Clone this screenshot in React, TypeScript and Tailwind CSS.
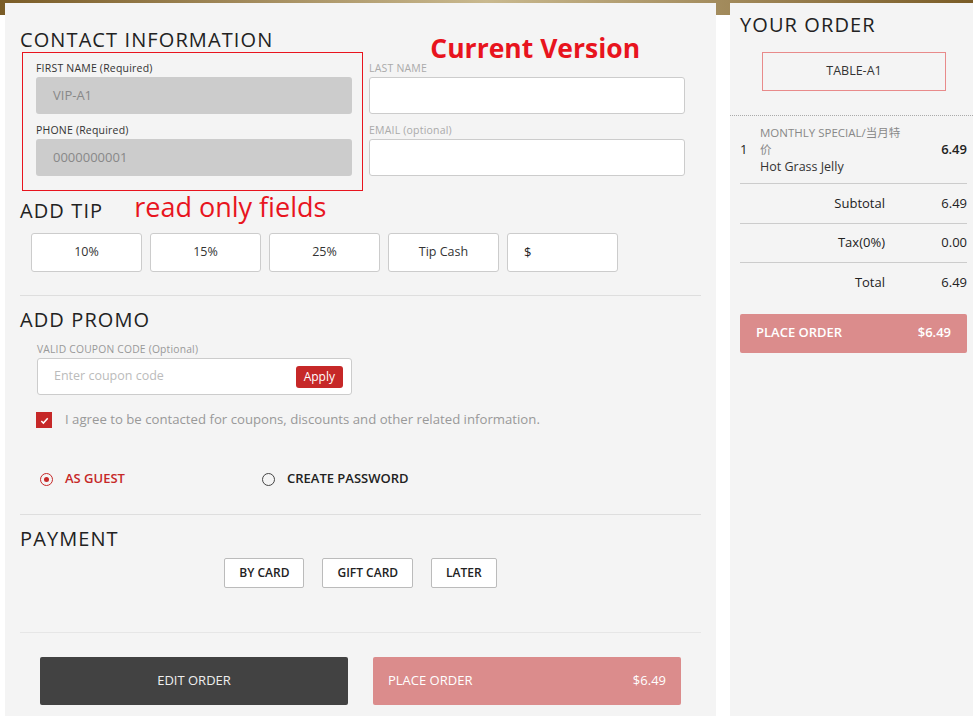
const font = { fontFamily: '"Open Sans", "Noto Sans CJK SC", sans-serif' };

function TextField({ label, value, readOnly, labelMuted }: { label: string; value?: string; readOnly?: boolean; labelMuted?: boolean }) {
  return (
    <div className="flex flex-col">
      <span className={`text-[10.5px] leading-[14px] tracking-[0.2px] ${labelMuted ? 'text-[#aaa]' : 'text-[#333]'}`}>{label}</span>
      <div
        className={`mt-[2px] h-[37px] rounded-[3px] flex items-center px-[17px] text-[13px] ${
          readOnly ? 'bg-[#cccccc] text-[#888]' : 'bg-white border border-[#ccc]'
        }`}
      >
        {value}
      </div>
    </div>
  );
}

function SectionTitle({ children }: { children: React.ReactNode }) {
  return <h2 className="h-[24px] text-[20px] leading-[24px] text-[#222] tracking-[1.1px] whitespace-nowrap">{children}</h2>;
}

export default function App() {
  const tips = ['10%', '15%', '25%', 'Tip Cash'];
  return (
    <div className="w-[973px] h-[716px] overflow-hidden bg-white" style={font}>
      {/* gold banner behind panels */}
      <div className="h-[15px] bg-gradient-to-r from-[#7a5c26] via-[#c9b98f] to-[#7a5c26]" />
      <div className="flex -mt-[12px] h-[713px]">
        {/* LEFT: checkout form */}
        <div className="ml-[5px] w-[711px] bg-[#f4f4f4] pl-[15px] pr-[15px] pt-[25px]">
          <div className="flex items-start h-[24px]">
            <SectionTitle>CONTACT INFORMATION</SectionTitle>
            <span className="ml-[157px] mt-[5px] text-[26.5px] font-bold leading-[30px] text-[#e8141e] whitespace-nowrap">Current Version</span>
          </div>
          <div className="flex">
            <div className="ml-[2px] w-[341px] h-[139px] border border-[#e8141e] pt-[8px] pl-[13px] pr-[10px] flex flex-col gap-[9px]">
              <TextField label="FIRST NAME (Required)" value="VIP-A1" readOnly />
              <TextField label="PHONE (Required)" value="0000000001" readOnly />
            </div>
            <div className="ml-[6px] w-[316px] pt-[9px] flex flex-col gap-[9px]">
              <TextField label="LAST NAME" labelMuted />
              <TextField label="EMAIL (optional)" labelMuted />
            </div>
          </div>

          <div className="flex items-start h-[24px] mt-[8px]">
            <SectionTitle>ADD TIP</SectionTitle>
            <span className="ml-[31px] -mt-[7px] text-[27px] leading-[30px] text-[#e8141e] whitespace-nowrap">read only fields</span>
          </div>
          <div className="flex gap-[8px] mt-[10px] ml-[11px]">
            {tips.map((t) => (
              <button key={t} className="w-[111px] h-[39px] bg-white border border-[#ccc] rounded-[3px] text-[12.5px] text-[#333]">
                {t}
              </button>
            ))}
            <div className="w-[111px] h-[39px] bg-white border border-[#ccc] rounded-[3px] text-[13px] text-[#222] flex items-center pl-[16px]">$</div>
          </div>

          <div className="h-px bg-[#dedede] mt-[23px]" />

          <div className="mt-[12px]">
            <SectionTitle>ADD PROMO</SectionTitle>
          </div>
          <div className="ml-[17px] mt-[10px] w-[315px]">
            <div className="h-[14px] leading-[14px] text-[10.3px] tracking-[0.2px] text-[#999]">VALID COUPON CODE (Optional)</div>
            <div className="mt-[2px] h-[37px] bg-white border border-[#ccc] rounded-[3px] flex items-center justify-between pl-[16px] pr-[8px]">
              <span className="text-[12.5px] text-[#bbb]">Enter coupon code</span>
              <button className="h-[22px] px-[8px] rounded-[3px] bg-[#c62828] text-white text-[12px]">Apply</button>
            </div>
          </div>
          <div className="flex items-center h-[18px] ml-[16px] mt-[16px]">
            <span className="w-[16px] h-[16px] bg-[#c62828] flex items-center justify-center">
              <svg width="11" height="11" viewBox="0 0 12 12" fill="none" stroke="white" strokeWidth="1.6">
                <path d="M2.5 6.5l2.3 2.3L9.5 3.5" />
              </svg>
            </span>
            <span className="ml-[13px] text-[13.2px] text-[#999] whitespace-nowrap">I agree to be contacted for coupons, discounts and other related information.</span>
          </div>

          <div className="flex items-center h-[18px] mt-[41px] ml-[20px] text-[13px] font-semibold">
            <span className="w-[13px] h-[13px] rounded-full border-[1.5px] border-[#c62828] flex items-center justify-center">
              <span className="w-[5px] h-[5px] rounded-full bg-[#c62828]" />
            </span>
            <span className="ml-[12px] text-[#c62828] w-[197px]">AS GUEST</span>
            <span className="w-[13px] h-[13px] rounded-full border-[1.5px] border-[#444]" />
            <span className="ml-[12px] text-[#222]">CREATE PASSWORD</span>
          </div>

          <div className="h-px bg-[#dedede] mt-[26px]" />

          <div className="mt-[12px]">
            <SectionTitle>PAYMENT</SectionTitle>
          </div>
          <div className="flex justify-center gap-[18px] mt-[7px]">
            {['BY CARD', 'GIFT CARD', 'LATER'].map((p) => (
              <button key={p} className="h-[30px] px-[14px] bg-white border border-[#bbb] rounded-[2px] text-[12px] font-semibold text-[#222]">
                {p}
              </button>
            ))}
          </div>

          <div className="h-px bg-[#e6e6e6] mt-[44px]" />

          <div className="flex gap-[25px] mt-[24px] ml-[20px]">
            <button className="w-[308px] h-[48px] rounded-[2px] bg-[#424242] text-[#eee] text-[13px]">EDIT ORDER</button>
            <button className="w-[308px] h-[48px] rounded-[2px] bg-[#db8c8c] text-white text-[13px] flex items-center justify-between px-[15px]">
              <span>PLACE ORDER</span>
              <span>$6.49</span>
            </button>
          </div>
        </div>

        {/* RIGHT: order summary */}
        <div className="ml-[14px] flex-1 bg-[#f4f4f4] pt-[10px]">
          <div className="pl-[10px]">
            <SectionTitle>YOUR ORDER</SectionTitle>
          </div>
          <div className="mt-[15px] ml-[32px] w-[184px] h-[39px] border border-[#e88a8a] flex items-center justify-center text-[12.5px] text-[#333]">
            TABLE-A1
          </div>
          <div className="mt-[24px] border-t border-dotted border-[#aaa]" />
          <div className="pl-[10px] pr-[6px]">
            <div className="flex items-center pt-[8px] pb-[8px] border-b border-[#ccc]">
              <span className="w-[20px] text-[13px] text-[#222]">1</span>
              <div className="flex-1 flex flex-col leading-[17px]">
                <span className="text-[11.5px] text-[#888] w-[150px]">MONTHLY SPECIAL/当月特价</span>
                <span className="text-[12.5px] text-[#333]">Hot Grass Jelly</span>
              </div>
              <span className="text-[13px] font-semibold text-[#222]">6.49</span>
            </div>
            {[
              ['Subtotal', '6.49'],
              ['Tax(0%)', '0.00'],
              ['Total', '6.49'],
            ].map(([l, v], i) => (
              <div key={l} className={`flex items-center h-[39.5px] text-[13px] text-[#222] ${i < 2 ? 'border-b border-[#ccc]' : ''}`}>
                <span className="w-[145px] text-right">{l}</span>
                <span className="flex-1 text-right">{v}</span>
              </div>
            ))}
            <button className="mt-[11px] w-full h-[39px] rounded-[2px] bg-[#db8c8c] text-white text-[13px] font-semibold flex items-center justify-between px-[16px]">
              <span>PLACE ORDER</span>
              <span>$6.49</span>
            </button>
          </div>
        </div>
      </div>
    </div>
  );
}
